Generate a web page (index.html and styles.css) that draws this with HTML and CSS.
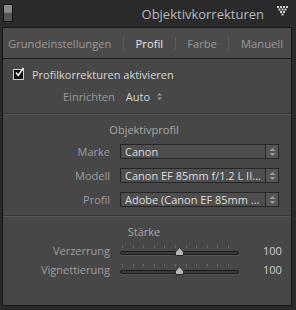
FILE: index.html
```html
<!DOCTYPE html>
<html>
<head>
<meta charset="utf-8">
<link rel="stylesheet" href="styles.css">
</head>
<body>
<div class="header">
  <div class="solo"></div>
  <div class="title">Objektivkorrekturen</div>
  <svg class="tri" width="11" height="10" viewBox="0 0 11 10">
    <g fill="#cfcfcf">
      <rect x="0" y="0" width="2" height="2"/><rect x="3" y="0" width="2" height="2"/><rect x="6" y="0" width="2" height="2"/><rect x="9" y="0" width="2" height="2"/>
      <rect x="1.5" y="2.5" width="2" height="2"/><rect x="4.5" y="2.5" width="2" height="2"/><rect x="7.5" y="2.5" width="2" height="2"/>
      <rect x="3" y="5" width="2" height="2"/><rect x="6" y="5" width="2" height="2"/>
      <rect x="4.5" y="7.5" width="2" height="2"/>
    </g>
  </svg>
</div>
<div class="panel">
  <div class="tabs">
    <span class="tab">Grundeinstellungen</span>
    <span class="sep"></span>
    <span class="tab active">Profil</span>
    <span class="sep"></span>
    <span class="tab">Farbe</span>
    <span class="sep"></span>
    <span class="tab">Manuell</span>
  </div>
  <div class="section first">
    <label class="check"><span class="box">
      <svg width="11" height="11" viewBox="0 0 11 11"><path d="M2 5.5 L4.2 8.5 L9.5 1" fill="none" stroke="#f0f0f0" stroke-width="1.6"/></svg>
    </span>Profilkorrekturen aktivieren</label>
    <div class="setup"><span class="lbl">Einrichten</span><span class="val">Auto</span>
      <svg class="ud" width="7" height="9" viewBox="0 0 7 9"><path d="M1 3.5 L3.5 1 L6 3.5 Z M1 5.5 L3.5 8 L6 5.5 Z" fill="#9a9a9a"/></svg>
    </div>
  </div>
  <div class="section mid">
    <div class="head">Objektivprofil</div>
    <div class="row"><span class="lbl">Marke</span><div class="select"><span class="stext">Canon</span><span class="step"><svg width="7" height="10" viewBox="0 0 7 10"><path d="M0.5 4 L3.5 1 L6.5 4 Z M0.5 6 L3.5 9 L6.5 6 Z" fill="#9a9a9a"/></svg></span></div></div>
    <div class="row"><span class="lbl">Modell</span><div class="select"><span class="stext">Canon EF 85mm f/1.2 L II...</span><span class="step"><svg width="7" height="10" viewBox="0 0 7 10"><path d="M0.5 4 L3.5 1 L6.5 4 Z M0.5 6 L3.5 9 L6.5 6 Z" fill="#9a9a9a"/></svg></span></div></div>
    <div class="row"><span class="lbl">Profil</span><div class="select"><span class="stext">Adobe (Canon EF 85mm ...</span><span class="step"><svg width="7" height="10" viewBox="0 0 7 10"><path d="M0.5 4 L3.5 1 L6.5 4 Z M0.5 6 L3.5 9 L6.5 6 Z" fill="#9a9a9a"/></svg></span></div></div>
  </div>
  <div class="section last">
    <div class="head">Stärke</div>
    <div class="srow"><span class="lbl">Verzerrung</span><div class="slider"><div class="ticks"></div><div class="track"></div><svg class="thumb" width="11" height="9" viewBox="0 0 11 9"><path d="M5.5 0.5 L9.5 5 L9.5 8.5 L1.5 8.5 L1.5 5 Z" fill="#b5b5b5" stroke="#2a2a2a" stroke-width="1"/></svg></div><span class="num">100</span></div>
    <div class="srow"><span class="lbl">Vignettierung</span><div class="slider"><div class="ticks"></div><div class="track"></div><svg class="thumb" width="11" height="9" viewBox="0 0 11 9"><path d="M5.5 0.5 L9.5 5 L9.5 8.5 L1.5 8.5 L1.5 5 Z" fill="#b5b5b5" stroke="#2a2a2a" stroke-width="1"/></svg></div><span class="num">100</span></div>
  </div>
</div>
</body>
</html>
```
FILE: styles.css
```css
html, body {
  margin: 0;
  padding: 0;
}
body {
  width: 296px;
  height: 310px;
  background: #2a2a2a;
  font-family: "Open Sans", "DejaVu Sans", sans-serif;
  font-size: 11px;
  color: #a8a8a8;
  overflow: hidden;
}
.header {
  height: 27px;
  display: flex;
  align-items: center;
  padding: 0 8px 0 3px;
}
.solo {
  width: 8px;
  height: 16px;
  border: 1px solid #111;
  background: linear-gradient(#8a8a8a 0 45%, #555 50% 100%);
  margin-top: -2px;
}
.title {
  flex: 1;
  text-align: right;
  font-size: 13px;
  color: #b8b8b8;
  padding-right: 13px;
}
.tri {
  margin-top: -6px;
}
.panel {
  margin: 0 4px 0 2px;
  height: 278px;
  background: #474747;
  border: 1px solid #151515;
  border-top: none;
}
.tabs {
  height: 30px;
  display: flex;
  align-items: center;
  justify-content: space-between;
  padding: 0 8px 0 5px;
  background: #4b4b4b;
  border-top: 1px solid #1a1a1a;
  border-bottom: 1px solid #1a1a1a;
  color: #989898;
  font-size: 11.2px;
}
.tab.active { color: #e6e6e6; }
.sep {
  width: 1px;
  height: 12px;
  background: #5e5e5e;
}
.section {
  border-bottom: 1px solid #383838;
  box-shadow: 0 1px 0 #545454;
}
.section.first { padding: 7px 0 9px 10px; }
.section.mid { padding-bottom: 8px; }
.section.last { border-bottom: none; box-shadow: none; }
.check {
  display: flex;
  align-items: center;
  color: #d6d6d6;
  height: 16px;
}
.box {
  width: 9px;
  height: 9px;
  border: 1px solid #cfcfcf;
  background: #111;
  margin-right: 8px;
  position: relative;
}
.box svg {
  position: absolute;
  left: 0;
  top: -3px;
}
.setup {
  display: flex;
  align-items: center;
  margin-top: 6px;
  padding-left: 50px;
  height: 16px;
}
.setup .lbl { color: #9c9c9c; margin-right: 11px; }
.setup .val { color: #d6d6d6; margin-right: 6px; }
.head {
  text-align: center;
  color: #a8a8a8;
  padding-right: 6px;
  padding-top: 8px;
  height: 16px;
}
.row {
  display: flex;
  align-items: center;
  margin-top: 6px;
}
.row + .row { margin-top: 9px; }
.lbl {
  color: #9e9e9e;
}
.row .lbl, .srow .lbl {
  width: 107px;
  text-align: right;
  margin-right: 10px;
}
.select {
  width: 157px;
  height: 13px;
  border: 1px solid #262626;
  background: #4e4e4e;
  display: flex;
  align-items: center;
}
.stext {
  flex: 1;
  color: #dedede;
  padding-left: 4px;
  line-height: 13px;
  white-space: nowrap;
  overflow: hidden;
}
.step {
  width: 12px;
  height: 13px;
  border-left: 1px solid #262626;
  background: #555;
  display: flex;
  align-items: center;
  justify-content: center;
}
.srow {
  display: flex;
  align-items: center;
  height: 19px;
}
.srow:nth-child(2) { margin-top: 1px; }
.slider {
  position: relative;
  width: 119px;
  height: 14px;
  margin-right: 24px;
}
.ticks {
  position: absolute;
  left: 2px;
  right: 0;
  top: 1px;
  height: 3px;
  background: repeating-linear-gradient(90deg, #666 0 1px, transparent 1px 10.6px);
}
.track {
  position: absolute;
  left: 0;
  right: 0;
  top: 7px;
  height: 2px;
  border: 1px solid #1c1c1c;
  border-radius: 3px;
  background: #3a3a3a;
  box-shadow: 0 1px 0 #555;
}
.thumb {
  position: absolute;
  left: 54px;
  top: 3px;
}
.num {
  color: #cfcfcf;
}
```
